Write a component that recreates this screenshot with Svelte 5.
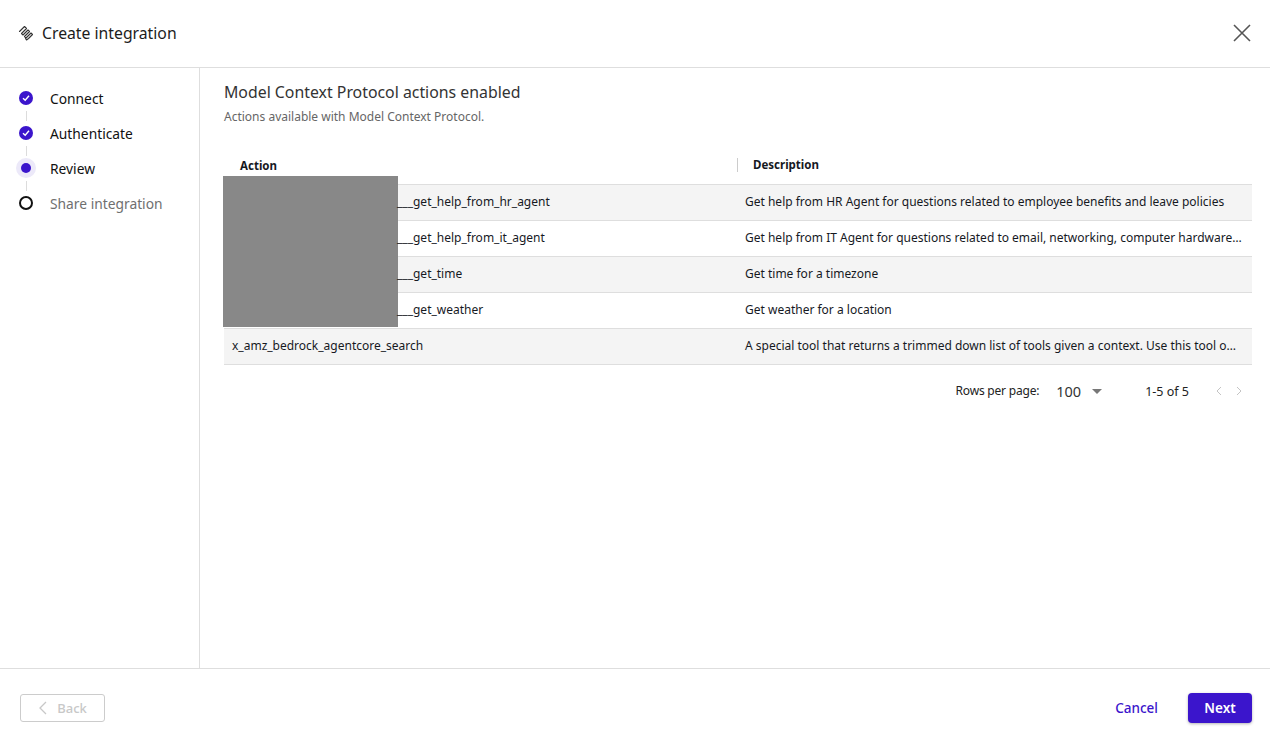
<script lang="ts">
	const steps = [
		{ label: 'Connect', state: 'done' },
		{ label: 'Authenticate', state: 'done' },
		{ label: 'Review', state: 'current' },
		{ label: 'Share integration', state: 'todo' }
	];

	const rows = [
		{ hidden: true, action: '___get_help_from_hr_agent', description: 'Get help from HR Agent for questions related to employee benefits and leave policies' },
		{ hidden: true, action: '___get_help_from_it_agent', description: 'Get help from IT Agent for questions related to email, networking, computer hardware, software and other IT issues' },
		{ hidden: true, action: '___get_time', description: 'Get time for a timezone' },
		{ hidden: true, action: '___get_weather', description: 'Get weather for a location' },
		{ hidden: false, action: 'x_amz_bedrock_agentcore_search', description: 'A special tool that returns a trimmed down list of tools given a context. Use this tool only when there are many tools available' }
	];
</script>

<div class="modal">
	<header class="top">
		<div class="title">
			<svg class="logo" width="16" height="16" viewBox="0 0 16 16" fill="none" stroke="#333" stroke-width="1.100" stroke-linejoin="round" stroke-linecap="round">
				<path d="M1.500 6.500 6.500 1.500 8.500 3.500 3.500 8.500 5 10 10 5 11.500 6.500 6.500 11.500 8 13 13 8 14.500 9.500 10.500 13.500 8.500 15 7.500 13.500" />
			</svg>
			<h1>Create integration</h1>
		</div>
		<button class="close" aria-label="Close">
			<svg width="18" height="18" viewBox="0 0 18 18" fill="none" stroke="#555" stroke-width="1.6">
				<path d="M1 1l16 16M17 1 1 17" />
			</svg>
		</button>
	</header>

	<div class="middle">
		<nav class="side">
			{#each steps as step, i}
				<div class="step">
					<div class="marker">
						{#if step.state === 'done'}
							<span class="dot done">
								<svg width="8" height="8" viewBox="0 0 8 8" fill="none" stroke="#fff" stroke-width="1.400">
									<path d="M1 4.200 3.200 6.300 7 1.800" />
								</svg>
							</span>
						{:else if step.state === 'current'}
							<span class="dot current"></span>
						{:else}
							<span class="dot todo"></span>
						{/if}
						{#if i < steps.length - 1}
							<span class="line"></span>
						{/if}
					</div>
					<span class="label" class:muted={step.state === 'todo'}>{step.label}</span>
				</div>
			{/each}
		</nav>

		<main class="content">
			<h2>Model Context Protocol actions enabled</h2>
			<p class="sub">Actions available with Model Context Protocol.</p>

			<div class="table">
				<div class="redact"></div>
				<div class="thead">
					<div class="th first">Action</div>
					<div class="th second">Description</div>
				</div>
				{#each rows as row, i}
					<div class="tr" class:odd={i % 2 === 0}>
						<div class="td action">{#if row.hidden}<span class="prefix"></span>{/if}{row.action}</div>
						<div class="td desc">{row.description}</div>
					</div>
				{/each}
			</div>

			<div class="pager">
				<span class="rpp">Rows per page:</span>
				<span class="count">100</span>
				<span class="caret"></span>
				<span class="range">1-5 of 5</span>
				<svg class="chev" width="8" height="10" viewBox="0 0 8 10" fill="none" stroke="#c4c4c4" stroke-width="1">
					<path d="M6 1 2 5l4 4" />
				</svg>
				<svg class="chev two" width="8" height="10" viewBox="0 0 8 10" fill="none" stroke="#c4c4c4" stroke-width="1">
					<path d="M2 1l4 4-4 4" />
				</svg>
			</div>
		</main>
	</div>

	<footer class="bottom">
		<button class="back" disabled>
			<svg width="10" height="14" viewBox="0 0 10 14" fill="none" stroke="#c8c8c8" stroke-width="1.300">
				<path d="M8 1 2 7l6 6" />
			</svg>
			Back
		</button>
		<div class="actions">
			<button class="cancel">Cancel</button>
			<button class="next">Next</button>
		</div>
	</footer>
</div>

<style>
	:global(body) {
		background: #fff;
	}

	.modal {
		display: flex;
		flex-direction: column;
		height: 740px;
		font-family: 'Noto Sans', 'Open Sans', sans-serif;
		color: #16191f;
	}

	button {
		font-family: inherit;
		cursor: pointer;
	}

	.top {
		height: 68px;
		flex: none;
		box-sizing: border-box;
		display: flex;
		align-items: center;
		justify-content: space-between;
		padding: 0 19px 2px 18px;
		border-bottom: 1px solid #dedede;
	}

	.title {
		display: flex;
		align-items: center;
		gap: 8px;
	}

	h1 {
		margin: 0;
		font-size: 15.75px;
		font-weight: 400;
		color: #1c1c1c;
	}

	.close {
		display: flex;
		padding: 0;
		border: 0;
		background: none;
	}

	.middle {
		flex: 1;
		display: flex;
		min-height: 0;
	}

	.side {
		width: 200px;
		flex: none;
		box-sizing: border-box;
		padding-top: 23px;
		border-right: 1px solid #dedede;
	}

	.step {
		display: flex;
		align-items: flex-start;
		height: 35px;
		padding-left: 17px;
	}

	.marker {
		width: 18px;
		display: flex;
		flex-direction: column;
		align-items: center;
		margin-right: 15px;
	}

	.dot {
		width: 18px;
		height: 14px;
		display: flex;
		align-items: center;
		justify-content: center;
		box-sizing: border-box;
		position: relative;
	}

	.dot.done::before,
	.dot.current::before {
		content: '';
		position: absolute;
		left: 2px;
		top: 0;
		width: 14px;
		height: 14px;
		border-radius: 50%;
		background: #3b15cc;
	}

	.dot svg {
		position: relative;
	}

	.dot.current::before {
		left: 4px;
		top: 2px;
		width: 10px;
		height: 10px;
		box-shadow: 0 0 0 5px #ece9f9;
	}

	.dot.todo::before {
		content: '';
		position: absolute;
		left: 2px;
		top: 0;
		width: 14px;
		height: 14px;
		border-radius: 50%;
		box-sizing: border-box;
		border: 2px solid #111;
	}

	.line {
		width: 1px;
		height: 10px;
		margin-top: 6px;
		background: #dcdcdc;
	}

	.label {
		font-size: 13.8px;
		line-height: 16px;
		color: #111;
		font-weight: 400;
	}

	.label.muted {
		color: #6f6f6f;
	}

	.content {
		flex: 1;
		min-width: 0;
		padding: 14px 18px 0 24px;
	}

	h2 {
		margin: 0;
		font-size: 15.85px;
		line-height: 20px;
		font-weight: 400;
		color: #333;
	}

	.sub {
		margin: 7px 0 0;
		font-size: 12px;
		line-height: 16px;
		color: #666;
	}

	.table {
		position: relative;
		margin-top: 21px;
		font-size: 12px;
	}

	.redact {
		position: absolute;
		left: -1px;
		top: 30px;
		width: 175px;
		height: 151px;
		background: #888;
	}

	.thead {
		display: flex;
		height: 38px;
		align-items: center;
		border-bottom: 1px solid #dedede;
		font-size: 11.5px;
		font-weight: 700;
		color: #16191f;
	}

	.th.first {
		width: 513px;
		padding-left: 16px;
		box-sizing: border-box;
	}

	.th.second {
		padding-left: 15px;
		border-left: 1px solid #ccc;
		line-height: 14px;
	}

	.tr {
		display: flex;
		align-items: center;
		height: 35px;
		border-bottom: 1px solid #dedede;
		background: #fff;
	}

	.tr.odd {
		background: #f4f4f4;
	}

	.td {
		white-space: nowrap;
		overflow: hidden;
		text-overflow: ellipsis;
		color: #16191f;
		padding-bottom: 2px;
	}

	.td.action {
		width: 513px;
		flex: none;
		padding-left: 8px;
		box-sizing: border-box;
		position: relative;
	}

	.prefix {
		display: inline-block;
		width: 165px;
	}

	.td.desc {
		flex: 1;
		min-width: 0;
		padding-left: 8px;
		padding-right: 9px;
	}

	.pager {
		display: flex;
		align-items: center;
		justify-content: flex-end;
		height: 52px;
		padding-right: 9px;
		font-size: 12px;
		color: #222;
	}

	.rpp {
		letter-spacing: -0.2px;
		margin-bottom: 2px;
	}

	.count {
		margin-left: 17px;
		font-size: 14.5px;
		color: #333;
	}

	.caret {
		margin-left: 11px;
		width: 0;
		height: 0;
		border-left: 5px solid transparent;
		border-right: 5px solid transparent;
		border-top: 5px solid #777;
	}

	.range {
		margin-left: 43px;
		font-size: 12.5px;
	}

	.chev {
		margin-left: 26px;
	}

	.chev.two {
		margin-left: 12px;
	}

	.bottom {
		height: 72px;
		flex: none;
		display: flex;
		align-items: center;
		justify-content: space-between;
		padding: 6px 18px 0 20px;
		border-top: 1px solid #dedede;
		box-sizing: border-box;
	}

	.back {
		width: 85px;
		height: 28px;
		display: flex;
		align-items: center;
		justify-content: center;
		gap: 9px;
		background: #fff;
		border: 1px solid #ccc;
		border-radius: 3px;
		color: #c8c8c8;
		font-size: 13px;
		font-weight: 500;
		padding: 0;
	}

	.actions {
		display: flex;
		align-items: center;
		gap: 30px;
	}

	.cancel {
		border: 0;
		background: none;
		padding: 0;
		color: #3b15cc;
		font-size: 13.5px;
		font-weight: 500;
	}

	.next {
		width: 64px;
		height: 30px;
		border: 0;
		border-radius: 4px;
		background: #3b15cc;
		color: #fff;
		font-size: 13.5px;
		font-weight: 600;
		box-shadow: 0 1px 3px rgba(0, 0, 0, 0.3);
	}
</style>
